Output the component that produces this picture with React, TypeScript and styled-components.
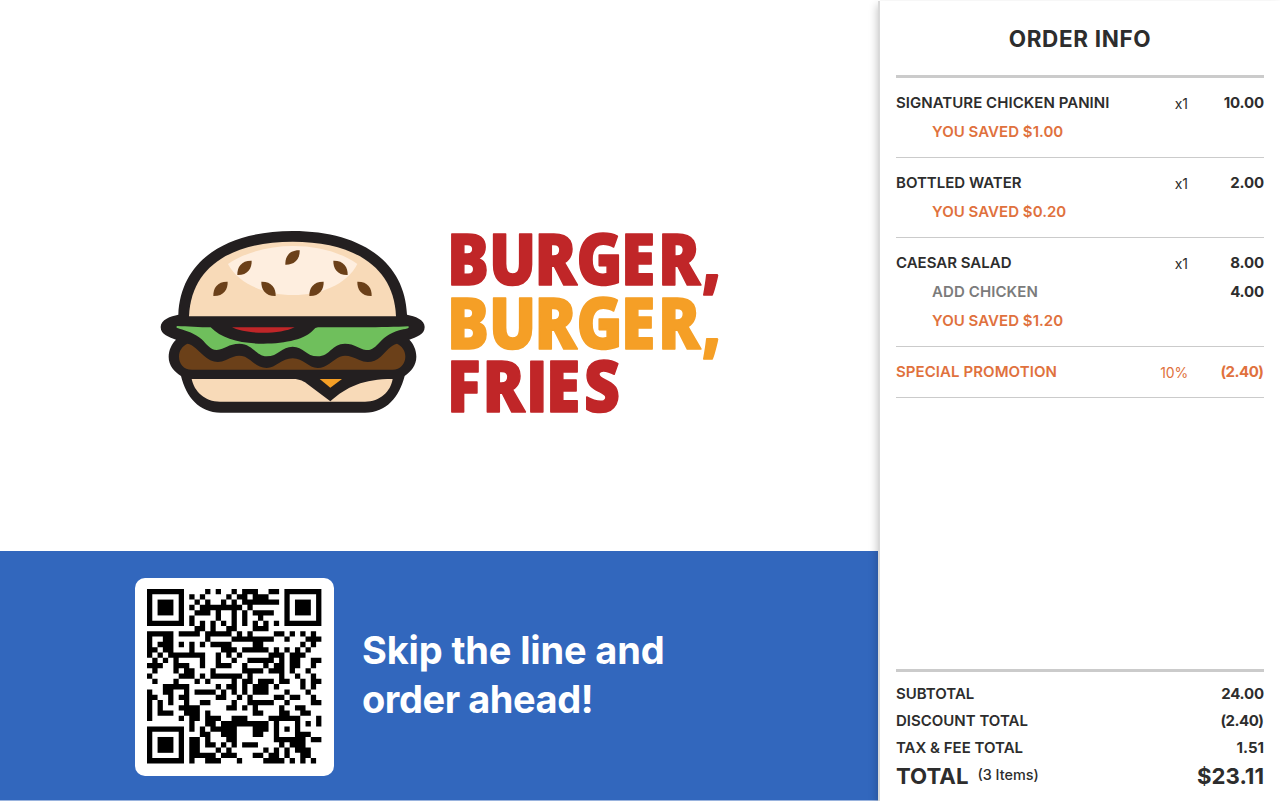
import React from "react";
import styled, { createGlobalStyle, css } from "styled-components";

const GlobalStyle = createGlobalStyle`
  * { box-sizing: border-box; }
  body {
    margin: 0;
    background: #fff;
    color: #2d2d2d;
    font-family: Inter, "Liberation Sans", sans-serif;
  }
`;

const Screen = styled.div`
  display: grid;
  grid-template-columns: 878px 402px;
  width: 1280px;
  height: 801px;
  overflow: hidden;
`;

const Display = styled.main`
  display: flex;
  flex-direction: column;
  height: 801px;
`;

const Hero = styled.section`
  display: flex;
  align-items: flex-start;
  height: 551px;
  padding: 220px 0 0 150px;
`;

const BurgerArt = styled.svg`
  flex: none;
  width: 290px;
  height: 205px;
`;

const Wordmark = styled.svg`
  flex: none;
  width: 290px;
  height: 205px;
  font-family: "Open Sans", sans-serif;
  font-weight: 800;
`;

const Banner = styled.section`
  display: flex;
  align-items: center;
  gap: 28px;
  height: 250px;
  padding: 2px 0 0 135px;
  border-bottom: 1px solid #99b3de;
  background: #3267bd;
  background-clip: padding-box;
`;

const QrCard = styled.div`
  display: flex;
  align-items: center;
  justify-content: center;
  width: 199px;
  height: 198px;
  border-radius: 10px;
  background: #fff;
`;

const Slogan = styled.h1`
  margin: 0;
  padding-bottom: 3px;
  color: #fff;
  font-size: 38px;
  font-weight: 700;
  line-height: 49px;
`;

const SloganLine = styled.span<{ $tracking: number }>`
  display: block;
  letter-spacing: ${(p) => p.$tracking}px;
`;

const Panel = styled.aside`
  display: flex;
  flex-direction: column;
  position: relative;
  height: 800px;
  margin-top: 1px;
  padding: 0 16px;
  border-left: 2px solid #d9d9d9;
  background: #fff;
  box-shadow: -1px 4px 8px rgba(0, 0, 0, 0.22);
`;

const Heading = styled.h2`
  height: 77px;
  margin: 0;
  padding-top: 23px;
  border-bottom: 3px solid #cbcbcb;
  font-size: 22.5px;
  font-weight: 700;
  line-height: 29px;
  letter-spacing: 0.65px;
  text-align: center;
`;

const Items = styled.div`
  flex: 1;
`;

const Item = styled.section`
  padding: 10px 0 11px;
  border-bottom: 1px solid #cbcbcb;
`;

type Tone = "dark" | "muted" | "saving";
const tones: Record<Tone, string> = { dark: "#2d2d2d", muted: "#7b7b7b", saving: "#e0713d" };

const Row = styled.div<{ $tone?: Tone; $nested?: boolean }>`
  display: grid;
  grid-template-columns: 1fr 60px 76px;
  align-items: center;
  height: 29px;
  color: ${(p) => tones[p.$tone ?? "dark"]};
  font-size: 15px;
  ${(p) =>
    p.$nested &&
    css`
      padding-left: 36px;
    `}
`;

const Name = styled.span<{ $tracking?: number }>`
  font-weight: 600;
  letter-spacing: ${(p) => p.$tracking ?? 0}px;
  white-space: nowrap;
`;

const Quantity = styled.span<{ $tracking?: number }>`
  padding-top: 1px;
  font-size: 14px;
  font-weight: 400;
  letter-spacing: ${(p) => p.$tracking ?? 0}px;
  text-align: right;
`;

const Amount = styled.span<{ $tone?: Tone; $tracking?: number }>`
  grid-column: 3;
  color: ${(p) => (p.$tone ? tones[p.$tone] : "inherit")};
  font-weight: 700;
  letter-spacing: ${(p) => p.$tracking ?? 0}px;
  margin-right: ${(p) => -(p.$tracking ?? 0)}px;
  text-align: right;
  white-space: nowrap;
`;

const Totals = styled.footer`
  height: 132px;
  padding-top: 8px;
  border-top: 3px solid #cbcbcb;
`;

const TotalRow = styled.div`
  display: flex;
  justify-content: space-between;
  align-items: center;
  height: 27px;
  font-size: 15px;
`;

const GrandRow = styled.div`
  display: flex;
  align-items: center;
  height: 28px;
  font-size: 22.2px;
  font-weight: 700;
`;

const Count = styled.span`
  flex: 1;
  padding-bottom: 1px;
  margin-left: 9px;
  font-size: 14.4px;
  font-weight: 500;
`;

/* Dark modules of every row, as columns or column ranges. The three finder squares are drawn apart. */
const qrRows = [
  "11 13 16 18-20 23-24",
  "8 10 15 17-18 20-22",
  "9 11 14 16 18-24",
  "8 10-17 19",
  "9-11 13 16 18 20-23",
  "8 13 16 18 21",
  "8 10 12 14 16 18 20 22 24",
  "9-10 12 15-16 20-22",
  "0-4 6-9 11-15 17 19 24-25 27 29 31",
  "0 3-4 11 16-23 26 30-32",
  "0 2-4 6 8 10 12-15 20-21 29 31",
  "0-1 3-4 8 14-16 18-22 24 26 28 30",
  "0 2 4-10 13 15 17 23-25 27-29",
  "1 3 5 10 13 16 19-23 25 27-28 31-32",
  "0-2 5-7 10 13-15 18 22 24-25 27-28 31",
  "1 5 7-8 12 18-21 23-25 27 30",
  "0 6-8 10 12-17 19 25 28 31",
  "1 5 9 11 16 18-19 21-23 25-26 29 31-32",
  "3-7 13 15-16 18 20-22 24 29 31",
  "0 3-4 7 9-12 14 16 18 20-22 26 30",
  "0-1 4 6-7 13-14 17 19 24-25 27-28 31",
  "0 2 4 7 10-11 16 19-23 26 31-32",
  "0 2 6-9 15-16 18 20 25 28-29",
  "0 2-4 7-9 11 20-21 25-26 29-30",
  "0 6 8-9 11-13 16-18 23-28 32",
  "8 11-12 14 15-22 24 28 30 32",
  "8 10 12-16 20-22 24 26 28",
  "10-11 14-16 20-21 24 28-30",
  "8-9 11 15-16 24-29 31-32",
  "8-9 11-12 14 16 18-20 25 27-29",
  "8-9 13 15 22 24 26 28-30",
  "8-12 14-16 20-21 23-24 26 29-30",
  "8 11-13 17 22-25 27 29 31",
];

const qrModules = qrRows
  .flatMap((row, y) =>
    row.split(" ").map((run) => {
      const [from, to = from] = run.split("-").map(Number);
      const width = to - from + 1;
      return `M${from} ${y}h${width}v1h${-width}z`;
    }),
  )
  .join("");

const Qr = () => (
  <svg width="174.4" height="174.4" viewBox="0 0 33 33">
    {[[0, 0], [26, 0], [0, 26]].map(([x, y]) => (
      <g key={`${x}-${y}`}>
        <path fillRule="evenodd" d={`M${x} ${y}h7v7h-7zM${x + 1} ${y + 1}v5h5v-5z`} />
        <rect x={x + 2} y={y + 2} width="3" height="3" />
      </g>
    ))}
    <path d={qrModules} />
  </svg>
);

const seedsRight = [[262, 122], [406, 91], [190, 185], [478, 185]];
const seedsLeft = [[550, 122], [334, 185], [622, 185]];

const Burger = () => (
  <BurgerArt viewBox="0 0 870 615">
    <path
      fill="#231f20"
      d="M85 284C92 120 230 33 428 33C626 33 764 120 771 284C795 289 824 298 824 321C824 345 798 351 778 359C790 371 799 389 799 410C799 437 783 453 764 468C748 530 710 578 645 578H212C147 578 108 530 93 468C72 453 56 437 56 410C56 389 66 371 78 359C58 351 32 345 32 321C32 298 62 289 85 284Z"
    />
    <path fill="#f8dab8" d="M117 289C123 140 245 65 428 65C611 65 732 140 738 289Z" />
    <path fill="#feeedf" d="M234 132C340 60 520 60 622 132C560 256 300 256 234 132Z" />
    <g fill="#6b4019">
      {seedsRight.map(([x, y]) => (
        <path key={`${x}`} transform={`translate(${x} ${y})`} d="M0 43C-1 18 13 -1 43 0C44 24 30 44 0 43Z" />
      ))}
      {seedsLeft.map(([x, y]) => (
        <path key={`${x}`} transform={`translate(${x} ${y})`} d="M43 43C44 18 30 -1 0 0C-1 24 13 44 43 43Z" />
      ))}
      <path d="M126 449C100 449 87 430 87 410C87 392 97 378 112 371C130 374 145 392 160 406C180 426 205 431 228 420C250 410 262 404 285 410C305 420 322 444 350 444C378 444 395 415 428 415C460 415 475 444 503 444C530 444 550 418 570 410C590 404 605 410 628 420C650 431 675 426 692 410C707 396 722 375 741 371C756 378 766 392 766 410C766 430 752 449 727 449Z" />
    </g>
    <path
      fill="#6fbf5c"
      d="M82 318C110 319 150 322 182 322C215 356 270 371 340 371C410 371 468 356 490 330Q495 322 504 322H640C690 322 740 321 775 319C780 325 770 326 760 328C725 335 705 350 690 366C675 382 665 392 648 390C625 386 615 371 585 371C545 371 540 409 503 409C468 409 460 380 428 380C395 380 385 409 350 409C318 409 308 371 268 371C235 371 225 388 200 390C180 390 170 372 155 358C135 340 110 332 88 326C80 324 76 321 82 318Z"
    />
    <path fill="#c02628" d="M246 322H434C390 344 290 344 246 322Z" />
    <path
      fill="#f8dab8"
      d="M125 477H430C450 477 462 484 475 494L541 544C590 500 640 477 728 477C722 515 690 545 645 545H210C165 545 133 515 125 477Z"
    />
    <path fill="#f59f26" d="M509 477H576L541 503Z" />
  </BurgerArt>
);

const wordmarkLines = [
  { text: "BURGER,", y: 65.4, color: "#c02628" },
  { text: "BURGER,", y: 128.5, color: "#f59f26" },
  { text: "FRIES", y: 191.6, color: "#c02628" },
];
const burgerStops = [7, 49, 94.5, 136.5, 181, 218, 262];
const friesStops = [7, 42.5, 86, 106, 144];

const App = () => (
  <>
    <GlobalStyle />
    <Screen>
      <Display>
        <Hero>
          <Burger />
          <Wordmark viewBox="0 0 290 205">
            {wordmarkLines.map((line) => (
              <text
                key={line.y}
                transform={`translate(0 ${line.y}) scale(0.89 1)`}
                x={(line.text === "FRIES" ? friesStops : burgerStops).map((n) => n / 0.89).join(" ")}
                fontSize="70"
                fill={line.color}
                stroke={line.color}
                strokeWidth="1.6"
                strokeLinejoin="round"
              >
                {line.text}
              </text>
            ))}
          </Wordmark>
        </Hero>
        <Banner>
          <QrCard>
            <Qr />
          </QrCard>
          <Slogan>
            <SloganLine $tracking={-0.15}>Skip the line and</SloganLine>
            <SloganLine $tracking={-0.45}>order ahead!</SloganLine>
          </Slogan>
        </Banner>
      </Display>
      <Panel>
        <Heading>ORDER INFO</Heading>
        <Items>
          <Item>
            <Row><Name $tracking={0.04}>SIGNATURE CHICKEN PANINI</Name><Quantity>x1</Quantity><Amount $tracking={-0.15}>10.00</Amount></Row>
            <Row $tone="saving" $nested><Name $tracking={0.04}>YOU SAVED $1.00</Name></Row>
          </Item>
          <Item>
            <Row><Name>BOTTLED WATER</Name><Quantity>x1</Quantity><Amount $tracking={-0.2}>2.00</Amount></Row>
            <Row $tone="saving" $nested><Name $tracking={0.04}>YOU SAVED $0.20</Name></Row>
          </Item>
          <Item>
            <Row><Name>CAESAR SALAD</Name><Quantity>x1</Quantity><Amount $tracking={-0.2}>8.00</Amount></Row>
            <Row $tone="muted" $nested><Name $tracking={0.1}>ADD CHICKEN</Name><Amount $tone="dark" $tracking={-0.2}>4.00</Amount></Row>
            <Row $tone="saving" $nested><Name $tracking={0.04}>YOU SAVED $1.20</Name></Row>
          </Item>
          <Item>
            <Row $tone="saving"><Name $tracking={0.07}>SPECIAL PROMOTION</Name><Quantity $tracking={-0.2}>10%</Quantity><Amount $tracking={-0.5}>(2.40)</Amount></Row>
          </Item>
        </Items>
        <Totals>
          <TotalRow><Name>SUBTOTAL</Name><Amount $tracking={-0.2}>24.00</Amount></TotalRow>
          <TotalRow><Name>DISCOUNT TOTAL</Name><Amount $tracking={-0.5}>(2.40)</Amount></TotalRow>
          <TotalRow><Name>TAX &amp; FEE TOTAL</Name><Amount>1.51</Amount></TotalRow>
          <GrandRow><span>TOTAL</span><Count>(3 Items)</Count><Amount>$23.11</Amount></GrandRow>
        </Totals>
      </Panel>
    </Screen>
  </>
);

export default App;
